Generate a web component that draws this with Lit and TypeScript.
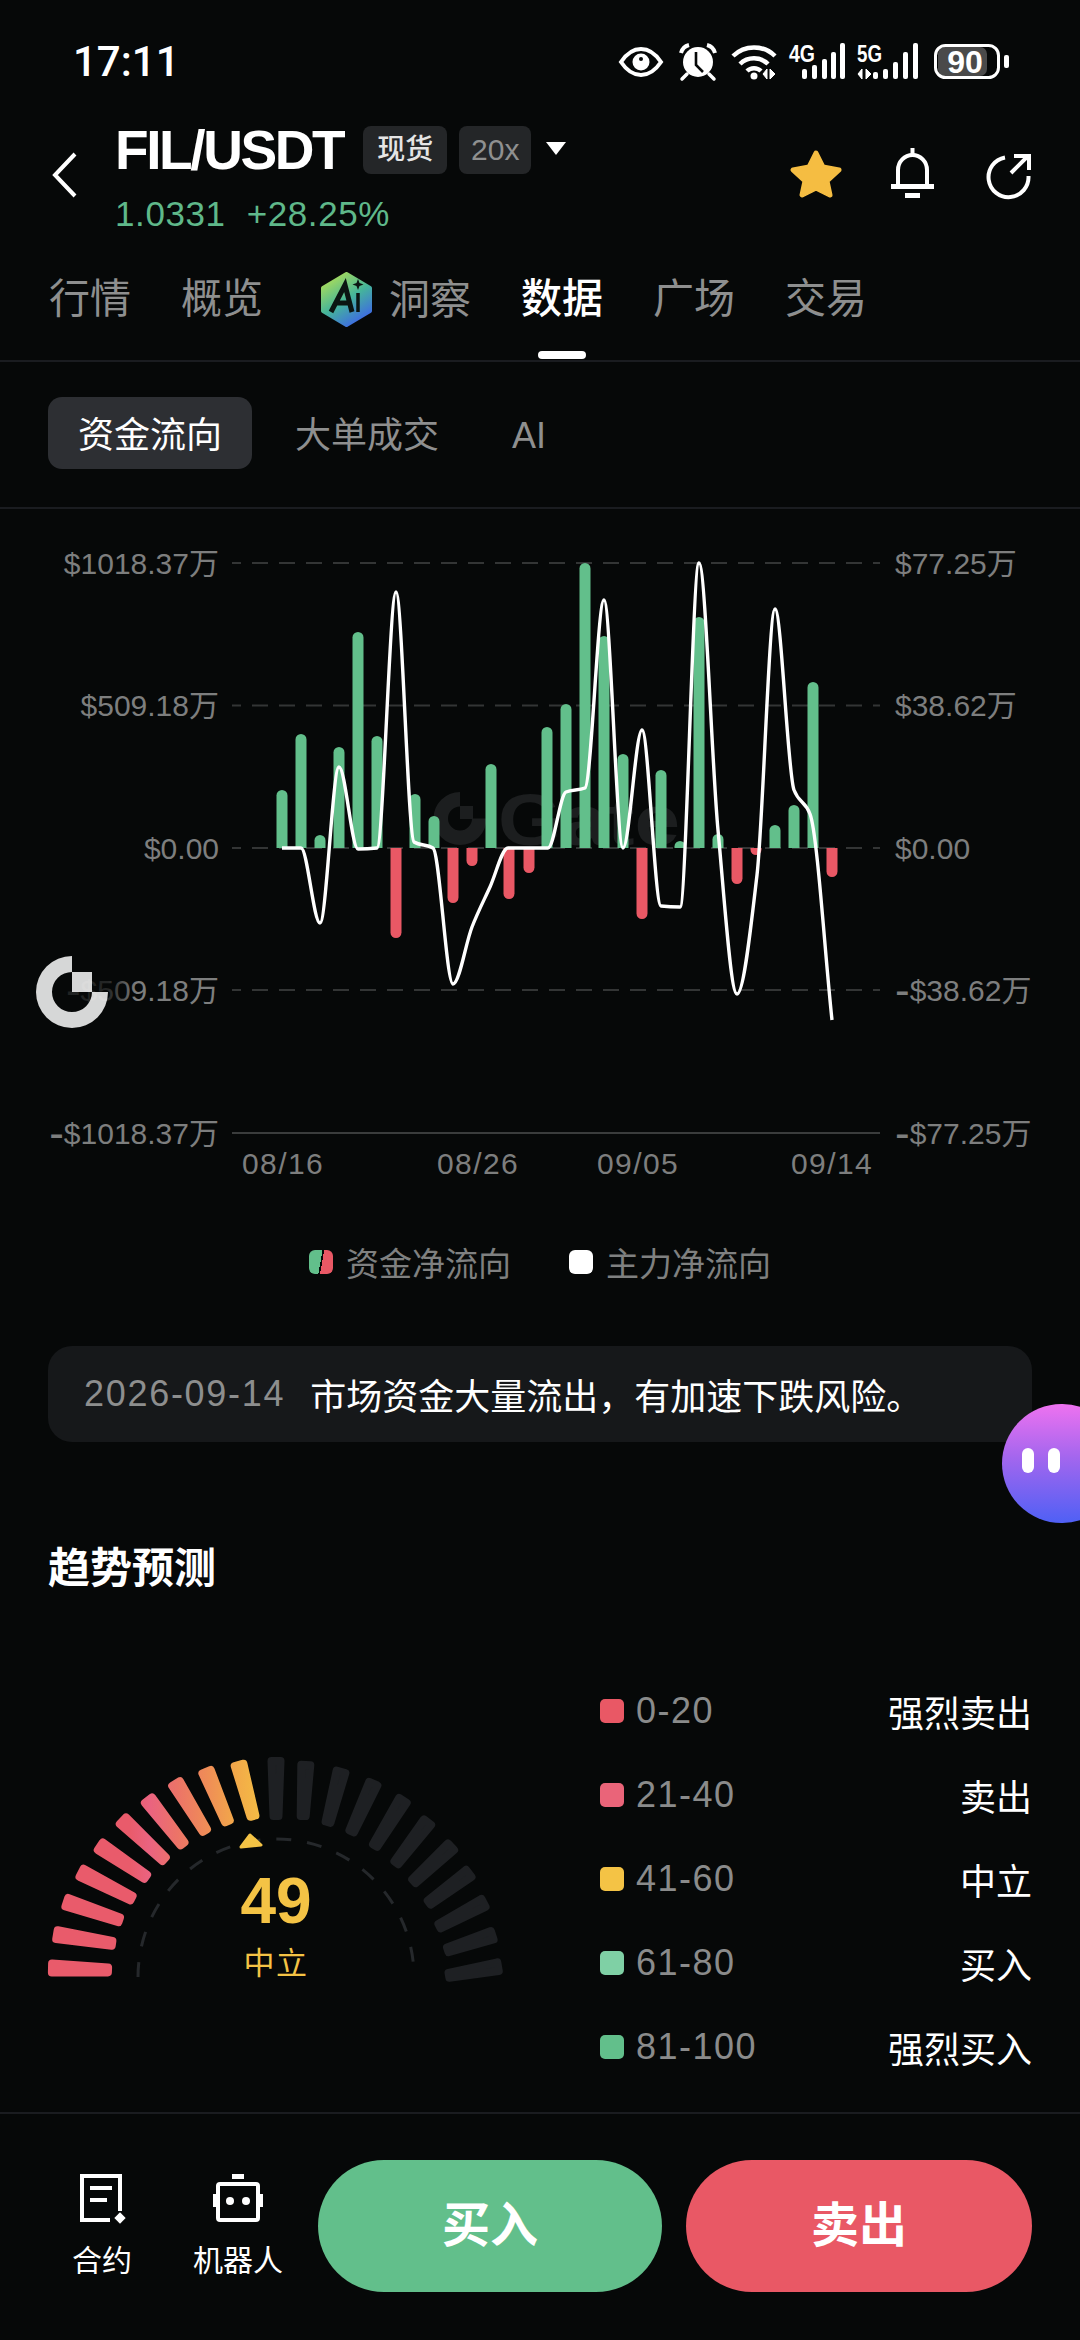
import { LitElement, html, css, svg } from "lit";
import { customElement } from "lit/decorators.js";

const GREEN = "#62bf8b";
const RED = "#e95865";
const GOLD = "#f4c345";

// [x center, far end y], zero line sits at y=848
const BARS: [number, number][] = [
  [282, 790], [301, 734], [320, 835], [339, 747], [358, 632], [377, 736], [396, 938], [415, 794],
  [434, 816], [453, 903], [472, 866], [491, 764], [509, 899], [529, 873], [547, 727], [566, 704],
  [585, 563], [604, 636], [623, 754], [642, 919], [661, 770], [680, 841], [699, 617], [718, 834],
  [737, 884], [756, 855], [775, 825], [794, 805], [813, 682], [832, 877],
];

const CURVE: [number, number][] = [
  [282, 848], [301, 848], [320, 923], [339, 767], [358, 849], [377, 848], [396, 592], [414, 842],
  [433, 848], [453, 984], [472, 927], [490, 887], [508, 848], [529, 848], [548, 848], [566, 792],
  [585, 788], [604, 600], [623, 848], [642, 730], [661, 906], [680, 907], [699, 563], [718, 830],
  [737, 994], [757, 875], [775, 609], [794, 790], [810, 814], [832, 1020],
];

// gauge ticks as outer tip -> inner tip
const TICKS: number[][] = [
  [48, 1968, 112, 1970], [53, 1934, 116, 1944], [63, 1901, 123, 1921], [78, 1871, 135, 1900],
  [97, 1844, 149, 1879], [120, 1818, 167, 1862], [146, 1797, 185, 1847], [174, 1780, 207, 1834],
  [205, 1768, 229, 1825], [238, 1761, 254, 1820], [276, 1757, 276, 1820], [306, 1761, 303, 1820],
  [342, 1768, 327, 1826], [375, 1780, 350, 1835], [405, 1797, 373, 1849], [430, 1819, 394, 1866],
  [454, 1844, 411, 1884], [472, 1871, 426, 1905], [487, 1901, 436, 1928], [496, 1934, 444, 1951],
  [502, 1966, 445, 1976],
];

const LEVELS = [
  { color: RED, range: "0-20", name: "强烈卖出" },
  { color: "#ea6479", range: "21-40", name: "卖出" },
  { color: GOLD, range: "41-60", name: "中立" },
  { color: "#7fd0a5", range: "61-80", name: "买入" },
  { color: GREEN, range: "81-100", name: "强烈买入" },
];

function smooth(pts: [number, number][]) {
  const d: number[] = [];
  for (let i = 0; i < pts.length - 1; i++) d.push((pts[i + 1][1] - pts[i][1]) / (pts[i + 1][0] - pts[i][0]));
  const m = pts.map((_, i) => {
    if (i === 0) return d[0];
    if (i === pts.length - 1) return d[i - 1];
    if (d[i - 1] * d[i] <= 0) return 0;
    return (2 * d[i - 1] * d[i]) / (d[i - 1] + d[i]);
  });
  let out = `M${pts[0][0]} ${pts[0][1]}`;
  for (let i = 0; i < pts.length - 1; i++) {
    const h = (pts[i + 1][0] - pts[i][0]) / 3;
    out += `C${pts[i][0] + h} ${pts[i][1] + m[i] * h} ${pts[i + 1][0] - h} ${pts[i + 1][1] - m[i + 1] * h} ${pts[i + 1][0]} ${pts[i + 1][1]}`;
  }
  return out;
}

function barPath(x: number, end: number) {
  const r = 5.5;
  const dir = end < 848 ? 1 : -1;
  const inner = end + dir * r;
  return `M${x - r} 848V${inner}A${r} ${r} 0 0 ${dir > 0 ? 1 : 0} ${x + r} ${inner}V848Z`;
}

function tickPoints(t: number[]) {
  const r = 4;
  const [px, py, qx, qy] = t;
  const len = Math.hypot(qx - px, qy - py);
  const dx = (qx - px) / len;
  const dy = (qy - py) / len;
  const nx = -dy;
  const ny = dx;
  const ho = 8.5 - r;
  const hi = 6.5 - r;
  return [
    [px + dx * r + nx * ho, py + dy * r + ny * ho],
    [qx - dx * r + nx * hi, qy - dy * r + ny * hi],
    [qx - dx * r - nx * hi, qy - dy * r - ny * hi],
    [px + dx * r - nx * ho, py + dy * r - ny * ho],
  ].map((p) => p.map((v) => v.toFixed(1)).join(",")).join(" ");
}

// the app's minus sign is longer than a hyphen, so draw the hyphen bigger
function axisLabel(t: string) {
  return t.startsWith("-")
    ? svg`<tspan class="minus" dy="4">-</tspan><tspan dy="-4">${t.slice(1)}</tspan>`
    : t;
}

@customElement("app-root")
class AppRoot extends LitElement {
  renderStatusIcons() {
    return html`<svg class="status-icons" viewBox="615 38 400 42" width="400" height="42">
      <path d="M621 60C627 51 634 47 641 47s14 4 20 13c-6 9-13 13-20 13s-14-4-20-13Z" fill="none" stroke="#fff" stroke-width="4"/>
      <circle cx="641" cy="60" r="8.5" fill="#fff"/><circle cx="641" cy="57" r="2" fill="#060808"/>

      <circle cx="698" cy="60" r="15" fill="#fff"/>
      <path d="M696 50v13l7 7" fill="none" stroke="#060808" stroke-width="2.6"/>
      <path d="M681 51a11 11 0 0 1 8-8M715 51a11 11 0 0 0-8-8" fill="none" stroke="#fff" stroke-width="4"/>
      <path d="M687 72l-5 5M709 72l5 5" stroke="#fff" stroke-width="3.5" stroke-linecap="round"/>

      <path d="M733 54a30 30 0 0 1 42 0M740 62a20 20 0 0 1 28 0M747 69a10 10 0 0 1 14 0" fill="none" stroke="#fff" stroke-width="4.5"/>
      <circle cx="754" cy="74" r="3.5" fill="#fff"/>
      <path d="M763 72l4 5v-10zM770 67v10l5-5z" fill="#fff" stroke="#fff" stroke-width="1"/>

      <text x="789" y="60" class="net" textLength="26" lengthAdjust="spacingAndGlyphs">4G</text>
      ${[[802, 67], [812, 63], [822, 57], [831, 50], [840, 41]].map(([x, y]) => svg`<rect x=${x} y=${y} width="5" height=${77 - y} rx="2" fill="#fff"/>`)}

      <text x="857" y="60" class="net" textLength="25" lengthAdjust="spacingAndGlyphs">5G</text>
      <path d="M858 72l4 5v-10zM866 67v10l5-5z" fill="#fff" stroke="#fff" stroke-width="1"/>
      ${[[873, 70], [883, 67], [893, 60], [903, 50], [913, 41]].map(([x, y]) => svg`<rect x=${x} y=${y} width="5" height=${77 - y} rx="2" fill="#fff"/>`)}

      <rect x="938" y="45" width="49" height="29" rx="7" fill="#4a4a4a"/>
      <rect x="935.5" y="43.5" width="63" height="32" rx="10" fill="none" stroke="#fff" stroke-width="3"/>
      <text x="965" y="71" class="batt" text-anchor="middle">90</text>
      <rect x="1004" y="53" width="5" height="13" rx="2" fill="#fff"/>
    </svg>`;
  }

  renderHeaderIcons() {
    return html`<svg class="head-icons" viewBox="785 145 250 58" width="250" height="58">
      <polygon points="816,153 823,167 839,170 827,181 830,195 816,188 802,195 805,181 793,170 809,167" fill="#f5bd42" stroke="#f5bd42" stroke-width="5" stroke-linejoin="round"/>

      <path d="M898 186V170a14.500 15 0 0 1 29 0V186" fill="none" stroke="#fff" stroke-width="4"/>
      <rect x="891" y="184" width="43" height="5" fill="#fff"/>
      <rect x="905" y="193" width="15" height="5" fill="#fff"/>
      <rect x="910.5" y="148" width="4" height="8" fill="#fff"/>

      <path d="M1005 157.500A20 20 0 1 0 1028.500 176" fill="none" stroke="#fff" stroke-width="4"/>
      <path d="M1011 173L1028 156M1014 156H1029V170" fill="none" stroke="#fff" stroke-width="4"/>
    </svg>`;
  }

  renderChart() {
    return html`<div class="chart-wrap">
      <svg class="chart" viewBox="0 509 1080 701" width="1080" height="701">
        ${[563, 705.5, 848, 990].map((y) => svg`<line x1="232" x2="880" y1=${y} y2=${y} stroke="#333535" stroke-width="2" stroke-dasharray="16 11" stroke-dashoffset="7"/>`)}
        <line x1="232" x2="880" y1="1133" y2="1133" stroke="#3a3c3c" stroke-width="2"/>

        <path d="M460 792A26.500 26.500 0 1 0 486.500 818.500H472A12 12 0 1 1 460 806.500Z" fill="#1c1e1f"/>
        <rect x="460" y="806" width="13" height="13" fill="#1c1e1f"/>
        <text x="498" y="845" class="mark" textLength="182" lengthAdjust="spacingAndGlyphs">Gate</text>

        ${BARS.map(([x, end]) => svg`<path d=${barPath(x, end)} fill=${end < 848 ? GREEN : RED}/>`)}
        <path d=${smooth(CURVE)} fill="none" stroke="#fff" stroke-width="3.4"/>

        ${[["$1018.37万", 563], ["$509.18万", 705], ["$0.00", 848], ["-$509.18万", 990], ["-$1018.37万", 1133]].map(
          ([t, y]) => svg`<text x="219" y=${(y as number) + 11} class="axis" text-anchor="end">${axisLabel(t as string)}</text>`)}
        ${[["$77.25万", 563], ["$38.62万", 705], ["$0.00", 848], ["-$38.62万", 990], ["-$77.25万", 1133]].map(
          ([t, y]) => svg`<text x="895" y=${(y as number) + 11} class="axis">${axisLabel(t as string)}</text>`)}
        ${[["08/16", 242], ["08/26", 437], ["09/05", 597], ["09/14", 791]].map(
          ([t, x]) => svg`<text x=${x} y="1174" class="axis date">${t}</text>`)}
      </svg>
      <svg class="float-logo" viewBox="36 956 100 72" width="100" height="72">
        <defs>
          <linearGradient id="fade" x1="0" x2="1" y1="0" y2="0">
            <stop offset="0" stop-color="#060808" stop-opacity=".8"/>
            <stop offset=".72" stop-color="#060808" stop-opacity=".75"/>
            <stop offset="1" stop-color="#060808" stop-opacity="0"/>
          </linearGradient>
        </defs>
        <rect x="36" y="974" width="100" height="34" fill="url(#fade)"/>
        <path d="M72 956A36 36 0 1 0 108 992H92A20 20 0 1 1 72 972Z" fill="#fff" opacity=".84"/>
        <rect x="72" y="972" width="20" height="20" fill="#fff" opacity=".84"/>
      </svg>
    </div>`;
  }

  renderGauge() {
    return html`<svg class="gauge" viewBox="0 1591 590 521" width="590" height="521">
      <defs>
        <linearGradient id="warm" gradientUnits="userSpaceOnUse" x1="130" x2="259" y1="0" y2="0">
          <stop offset="0" stop-color="#e95b6b"/>
          <stop offset=".15" stop-color="#ea6380"/>
          <stop offset=".36" stop-color="#ec7368"/>
          <stop offset=".6" stop-color="#ef8d57"/>
          <stop offset=".82" stop-color="#f2a949"/>
          <stop offset="1" stop-color="#f4bb45"/>
        </linearGradient>
      </defs>
      ${TICKS.map((t, i) => {
        const paint = i < 10 ? "url(#warm)" : "#1e2023";
        return svg`<polygon points=${tickPoints(t)} fill=${paint} stroke=${paint} stroke-width="8" stroke-linejoin="round"/>`;
      })}
      <path d="M138 1977A138 138 0 0 1 414 1977" fill="none" stroke="#25282b" stroke-width="3" stroke-dasharray="15 16"/>
      <polygon points="241,1847 250,1835 261,1845" fill=${GOLD} stroke=${GOLD} stroke-width="3" stroke-linejoin="round"/>
      <text x="276" y="1923" class="score" text-anchor="middle">49</text>
      <text x="276" y="1974" class="score-label" text-anchor="middle">中立</text>
    </svg>`;
  }

  render() {
    return html`
      <div class="page">
        <div class="status">
          <span class="time">17:11</span>
          ${this.renderStatusIcons()}
        </div>

        <div class="header">
          <svg class="back" viewBox="0 0 26 48" width="26" height="48">
            <path d="M23 4L3 25L23 46" fill="none" stroke="#fff" stroke-width="4"/>
          </svg>
          <div class="pair">
            <div class="title-row">
              <span class="title">FIL/USDT</span>
              <span class="badge spot">现货</span>
              <span class="badge lev">20x</span>
              <span class="caret"></span>
            </div>
            <div class="price"><span>1.0331</span><span>+28.25%</span></div>
          </div>
          ${this.renderHeaderIcons()}
        </div>

        <div class="tabs">
          <span class="tab">行情</span>
          <span class="tab">概览</span>
          <span class="tab ai">
            <svg viewBox="321 272 51 55" width="51" height="55">
              <defs>
                <linearGradient id="hex" x1="0.2" y1="0" x2="0.8" y2="1">
                  <stop offset="0" stop-color="#aede57"/>
                  <stop offset=".5" stop-color="#45b59a"/>
                  <stop offset="1" stop-color="#3d62ec"/>
                </linearGradient>
              </defs>
              <polygon points="346.500,274 370,288 370,311 346.500,325 323,311 323,288" fill="url(#hex)" stroke="url(#hex)" stroke-width="4" stroke-linejoin="round"/>
              <path d="M331 312L345 285L352 312M337 303H351" fill="none" stroke="#0b1512" stroke-width="5"/>
              <path d="M358 293V312" stroke="#0b1512" stroke-width="3.5"/>
              <path d="M358 279l1.500 4 4 1.500-4 1.500-1.500 4-1.500-4-4-1.500 4-1.500z" fill="#0b1512"/>
            </svg>
            洞察
          </span>
          <span class="tab active">数据<i></i></span>
          <span class="tab">广场</span>
          <span class="tab">交易</span>
        </div>

        <div class="subtabs">
          <span class="sub on">资金流向</span>
          <span class="sub">大单成交</span>
          <span class="sub">AI</span>
        </div>

        ${this.renderChart()}

        <div class="legend">
          <span class="swatch split"></span><span>资金净流向</span>
          <span class="swatch white"></span><span>主力净流向</span>
        </div>

        <div class="notice">
          <span class="notice-date">2026-09-14</span>
          <span>市场资金大量流出，有加速下跌风险。</span>
        </div>

        <div class="section-title">趋势预测</div>

        <div class="trend">
          ${this.renderGauge()}
          <div class="levels">
            ${LEVELS.map((l) => html`<div class="level">
              <span class="dot" style="background:${l.color}"></span>
              <span class="range">${l.range}</span>
              <span class="name">${l.name}</span>
            </div>`)}
          </div>
        </div>

        <div class="bottom">
          <div class="tool first">
            <svg viewBox="78 2172 50 52" width="50" height="52">
              <path d="M111 2220H83V2176H121V2211" fill="none" stroke="#fff" stroke-width="4"/>
              <path d="M91 2188H113M91 2200H108" stroke="#fff" stroke-width="4"/>
              <rect x="117" y="2214" width="8" height="8" transform="rotate(45 121 2218)" fill="#fff"/>
            </svg>
            <span>合约</span>
          </div>
          <div class="tool second">
            <svg viewBox="208 2172 60 52" width="60" height="52">
              <rect x="232" y="2174" width="12" height="5" fill="#fff"/>
              <rect x="218" y="2184" width="40" height="36" rx="2" fill="none" stroke="#fff" stroke-width="4"/>
              <rect x="213" y="2194" width="3" height="13" fill="#fff"/>
              <rect x="260" y="2194" width="3" height="13" fill="#fff"/>
              <circle cx="230" cy="2201" r="4" fill="#fff"/>
              <circle cx="246" cy="2201" r="4" fill="#fff"/>
            </svg>
            <span>机器人</span>
          </div>
          <div class="btn buy">买入</div>
          <div class="btn sell">卖出</div>
        </div>

        <div class="bubble"><i></i><i></i></div>
      </div>
    `;
  }

  static styles = css`
    :host {
      display: block;
      width: 1080px;
      height: 2340px;
      background: #060808;
      font-family: "Liberation Sans", "Noto Sans CJK SC", sans-serif;
      color: #fff;
    }

    .page {
      position: relative;
      width: 1080px;
      height: 2340px;
      overflow: hidden;
      display: flex;
      flex-direction: column;
    }

    svg {
      display: block;
      flex: none;
    }

    .status {
      height: 122px;
      padding: 0 65px 0 73px;
      display: flex;
      align-items: center;
      justify-content: space-between;
      box-sizing: border-box;
    }

    .time {
      font-family: Roboto, sans-serif;
      font-size: 42px;
      font-weight: 500;
    }

    .net {
      font: 700 24px "Liberation Sans", sans-serif;
      fill: #fff;
    }

    .batt {
      font: 700 32px "Liberation Sans", sans-serif;
      fill: #fff;
    }

    .header {
      height: 140px;
      position: relative;
      display: flex;
      align-items: flex-start;
      padding-left: 52px;
    }

    .back {
      margin-top: 28px;
    }

    .pair {
      margin-left: 37px;
      padding-top: 3px;
    }

    .title-row {
      display: flex;
      align-items: center;
      height: 48px;
      margin-top: 1px;
    }

    .title {
      font-size: 55px;
      font-weight: 700;
      letter-spacing: -2.4px;
      margin-right: 20px;
      line-height: 48px;
    }

    .badge {
      height: 48px;
      line-height: 48px;
      border-radius: 8px;
      background: #242628;
      font-size: 28px;
      text-align: center;
    }

    .spot {
      width: 84px;
      color: #e5e5e5;
      font-weight: 500;
      margin-right: 12px;
    }

    .lev {
      width: 72px;
      color: #8f9090;
      font-size: 30px;
    }

    .caret {
      width: 0;
      height: 0;
      margin: -4px 0 0 15px;
      border-left: 10px solid transparent;
      border-right: 10px solid transparent;
      border-top: 13px solid #fff;
    }

    .price {
      display: flex;
      gap: 21px;
      margin-top: 20px;
      height: 40px;
      line-height: 40px;
      font-size: 35px;
      letter-spacing: 0.6px;
      color: #5fb88a;
    }

    .head-icons {
      margin: 23px 0 0 auto;
      margin-right: 45px;
    }

    .tabs {
      height: 100px;
      box-sizing: border-box;
      border-bottom: 2px solid #1a1c20;
      padding: 17px 0 0 49px;
      display: flex;
      align-items: flex-start;
      gap: 50px;
    }

    .tab {
      position: relative;
      font-size: 41px;
      line-height: 40px;
      color: #8e8f8f;
    }

    .tab.ai {
      display: flex;
      align-items: center;
      gap: 17px;
      margin: -7px 0 0 8px;
      height: 55px;
    }

    .tab.active {
      color: #fff;
      font-weight: 500;
    }

    .tab.active i {
      position: absolute;
      left: 17px;
      top: 72px;
      width: 48px;
      height: 8px;
      border-radius: 4px;
      background: #fff;
    }

    .subtabs {
      height: 147px;
      box-sizing: border-box;
      border-bottom: 2px solid #1a1c20;
      padding: 35px 0 0 48px;
      display: flex;
      align-items: flex-start;
      gap: 13px;
    }

    .sub {
      height: 72px;
      line-height: 78px;
      padding: 0 30px;
      font-size: 36px;
      color: #8e8f8f;
      border-radius: 14px;
    }

    .sub.on {
      background: #2d2f33;
      color: #fff;
    }

    .chart-wrap {
      position: relative;
      height: 701px;
    }

    .axis {
      font-size: 30px;
      fill: #7d7e7e;
    }

    .minus {
      font-size: 44px;
    }

    .date {
      letter-spacing: 1.4px;
    }

    .mark {
      font: 700 72px "Liberation Sans", sans-serif;
      fill: #1c1e1f;
    }

    .float-logo {
      position: absolute;
      left: 36px;
      top: 447px;
    }

    .legend {
      height: 108px;
      box-sizing: border-box;
      padding: 0 0 5px 309px;
      display: flex;
      align-items: center;
      font-size: 33px;
      color: #7f8080;
    }

    .swatch {
      width: 24px;
      height: 24px;
      border-radius: 6px;
      margin-right: 13px;
    }

    .swatch.white {
      background: #fff;
      margin-left: 58px;
    }

    .swatch.split {
      background: linear-gradient(100deg, #62bf8b 0 48%, #060808 48% 54%, #e95865 54% 100%);
    }

    .notice {
      margin: 28px 48px 0;
      height: 96px;
      box-sizing: border-box;
      padding-left: 36px;
      background: #16181a;
      border-radius: 24px;
      display: flex;
      align-items: center;
      gap: 25px;
      font-size: 36px;
    }

    .notice-date {
      color: #8d8e8e;
      font-size: 36px;
      letter-spacing: 1.7px;
    }

    .section-title {
      margin: 99px 0 0 48px;
      font-size: 42px;
      font-weight: 700;
      line-height: 56px;
      height: 53px;
    }

    .trend {
      height: 518px;
      display: flex;
    }

    .gauge {
      margin-top: -3px;
    }

    .score {
      font: 700 64px "Liberation Sans", sans-serif;
      fill: #f4c345;
    }

    .score-label {
      font-size: 31px;
      letter-spacing: 1.5px;
      fill: #f4c345;
    }

    .levels {
      width: 432px;
      margin-left: 10px;
      padding-top: 75px;
    }

    .level {
      height: 84px;
      display: flex;
      align-items: center;
    }

    .dot {
      width: 24px;
      height: 24px;
      border-radius: 5px;
      margin-right: 12px;
    }

    .range {
      font-size: 36px;
      color: #8a8b8b;
      letter-spacing: 1.5px;
    }

    .name {
      margin-left: auto;
      font-size: 36px;
    }

    .bottom {
      flex: 1;
      box-sizing: border-box;
      border-top: 2px solid #1a1c20;
      padding: 46px 48px 0 52px;
      display: flex;
      align-items: flex-start;
    }

    .tool {
      display: flex;
      flex-direction: column;
      align-items: center;
      padding-top: 12px;
      font-size: 30px;
      line-height: 36px;
    }

    .tool span {
      margin-top: 19px;
    }

    .tool.first {
      width: 100px;
    }

    .tool.second {
      width: 120px;
      margin: 0 20px 0 26px;
    }

    .btn {
      height: 132px;
      line-height: 132px;
      border-radius: 66px;
      text-align: center;
      font-size: 48px;
      font-weight: 700;
    }

    .buy {
      width: 344px;
      background: #62bf8b;
    }

    .sell {
      width: 346px;
      margin-left: 24px;
      background: #e95865;
    }

    .bubble {
      position: absolute;
      left: 1002px;
      top: 1404px;
      width: 120px;
      height: 119px;
      border-radius: 60px;
      background: linear-gradient(180deg, #ee72f0 0%, #a366ee 45%, #4f60f5 100%);
    }

    .bubble i {
      position: absolute;
      top: 44px;
      left: 20px;
      width: 12px;
      height: 25px;
      border-radius: 6px;
      background: #fff;
    }

    .bubble i + i {
      left: 46px;
    }
  `;
}
